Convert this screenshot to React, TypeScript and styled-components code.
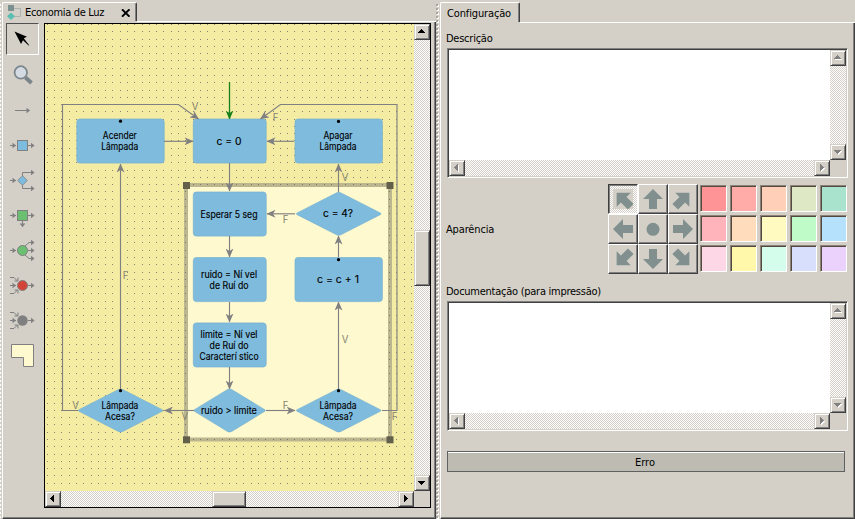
import React from "react";
import styled, { createGlobalStyle, css } from "styled-components";

const face = "#d4d0c8";
const uiFont = '"DejaVu Sans Condensed", "Noto Sans", sans-serif';

const GlobalStyle = createGlobalStyle`
  * { box-sizing: border-box; }
  body { margin: 0; background: ${face}; overflow: hidden; }
`;

const Window = styled.main`
  display: grid;
  grid-template-columns: 2px 434px 4px 415px;
  width: 855px;
  height: 519px;
  background: ${face};
  color: #000;
  font: 11px ${uiFont};
`;

const Grip = styled.div<{ $edge?: boolean }>`
  margin-top: 4px;
  background: ${(p) =>
    p.$edge
      ? "repeating-linear-gradient(#fff 0 2px, #d4d0c8 2px 4px) 0 0 / 1px 100% no-repeat"
      : `linear-gradient(#aaa69e 2px, transparent 2px) 0 0 / 2px 4px repeat-y,
         linear-gradient(transparent 1px, #fff 1px 3px, transparent 3px) 1px 0 / 2px 4px repeat-y`};
`;

const Pane = styled.section`
  display: flex;
  flex-direction: column;
  padding-top: 2px;
  min-width: 0;
`;

const Tab = styled.div<{ $width: number; $height: number }>`
  display: flex;
  align-items: center;
  flex: none;
  width: ${(p) => p.$width}px;
  height: ${(p) => p.$height}px;
  border-left: 1px solid #fff;
  border-top: 1px solid #fff;
  border-right: 1px solid #404040;
  border-radius: 2px 2px 0 0;
  box-shadow: inset -1px 0 #808080;
  white-space: nowrap;
`;

const TabTitle = styled.span<{ $left: number; $spacing: number; $width?: number }>`
  flex: none;
  width: ${(p) => (p.$width ? `${p.$width}px` : "auto")};
  margin-left: ${(p) => p.$left}px;
  padding-top: 2px;
  letter-spacing: ${(p) => p.$spacing}px;
  line-height: 14px;
`;

const TabLine = styled.div<{ $start: number }>`
  flex: none;
  height: 1px;
  background: linear-gradient(#fff, #fff) ${(p) => p.$start}px 0 no-repeat;
  border-left: 1px solid #fff;
`;

const PaneBody = styled.div`
  flex: 1;
  min-height: 0;
  border-left: 1px solid #fff;
  border-right: 1px solid #404040;
  border-bottom: 1px solid #404040;
  box-shadow: inset -1px -1px #808080;
`;

const EditorBody = styled(PaneBody)`
  display: flex;
  padding: 1px 0 0 3px;
`;

const Toolbar = styled.div`
  display: flex;
  flex-direction: column;
  gap: 3px;
  width: 38px;
`;

const ToolButton = styled.button<{ $active?: boolean }>`
  width: 33px;
  height: 32px;
  padding: 0;
  border: 1px solid transparent;
  background: transparent;
  ${(p) =>
    p.$active &&
    css`
      border-color: #505050 #fff #fff #505050;
    `}
  svg { display: block; }
`;

const checker = css`
  background: repeating-conic-gradient(#fff 0 25%, ${face} 0 50%) 0 0 / 2px 2px;
`;

const ScrollGrid = styled.div`
  display: grid;
  grid-template-columns: 1fr 16px;
  grid-template-rows: 1fr 16px;
`;

const CanvasFrame = styled(ScrollGrid)`
  width: 387px;
  height: 485px;
  border: 1px solid #000;
  svg { display: block; }
`;

const TextFrame = styled(ScrollGrid)`
  width: 401px;
  height: 130px;
  border: 1px solid;
  border-color: #808080 #fff #fff #808080;
  padding: 1px;
  box-shadow: inset 1px 1px #404040;
`;

const TextArea = styled.textarea`
  width: 100%;
  height: 100%;
  padding: 2px;
  border: 0;
  outline: 0;
  resize: none;
  background: #fff;
`;

const Track = styled.div<{ $vertical?: boolean }>`
  display: flex;
  flex-direction: ${(p) => (p.$vertical ? "column" : "row")};
  min-width: 0;
  min-height: 0;
  ${checker}
`;

const raised = css`
  background: ${face};
  border: 1px solid;
  border-color: #d4d0c8 #404040 #404040 #d4d0c8;
  box-shadow: inset 1px 1px #fff, inset -1px -1px #808080;
`;

const ArrowButton = styled.button`
  ${raised}
  flex: none;
  width: 16px;
  height: 16px;
  padding: 0;
  svg { display: block; }
`;

const Thumb = styled.div<{ $vertical?: boolean; $size: number }>`
  ${raised}
  width: ${(p) => (p.$vertical ? 16 : p.$size)}px;
  height: ${(p) => (p.$vertical ? p.$size : 16)}px;
`;

const Space = styled.div<{ $grow?: number; $size?: number }>`
  flex: ${(p) => (p.$grow ? `${p.$grow} 1 0` : `0 0 ${p.$size}px`)};
`;

const FormBody = styled(PaneBody)`
  display: flex;
  flex-direction: column;
  padding: 8px 0 0 6px;
`;

const Label = styled.label<{ $height: number; $spacing?: number }>`
  display: block;
  height: ${(p) => p.$height}px;
  line-height: 15px;
  margin-left: -1px;
  letter-spacing: ${(p) => p.$spacing ?? 0}px;
`;

const AppearanceRow = styled.div`
  display: flex;
  height: 90px;
  margin: 6px 0 10px;
`;

const AppearanceLabel = styled(Label)`
  align-self: center;
  width: 162px;
`;

const DirectionGrid = styled.div`
  display: grid;
  grid-template-columns: repeat(3, 30px);
  grid-template-rows: repeat(3, 30px);
`;

const Direction = styled.button<{ $active?: boolean }>`
  padding: 0;
  background: ${face};
  border: 1px solid;
  border-color: #fff #404040 #404040 #fff;
  box-shadow: inset -1px -1px #808080;
  ${(p) =>
    p.$active &&
    css`
      ${checker}
      border-color: #404040 #fff #fff #404040;
      box-shadow: inset 1px 1px #808080;
    `}
  svg { display: block; }
`;

const Swatches = styled.div`
  display: grid;
  grid-template-columns: repeat(5, 27px);
  grid-template-rows: repeat(3, 27px);
  gap: 3px;
  margin: 1px 0 0 2px;
`;

const Swatch = styled.button<{ $color: string }>`
  padding: 0;
  background: ${(p) => p.$color};
  border: 1px solid;
  border-color: #8b8378 #fff #fff #8b8378;
  box-shadow: inset 1px 1px #54493f;
`;

const ErrorButton = styled.button`
  width: 398px;
  height: 21px;
  margin-top: 20px;
  padding: 3px 2px 0 0;
  border: 1px solid #5f6161;
  background: #bebbb3;
  box-shadow: inset 0 1px #fff;
  font: 11px ${uiFont};
  line-height: 14px;
`;

type Dir = "up" | "down" | "left" | "right";
const arrowShape: Record<Dir, string> = {
  up: "M7 5h1v1h1v1h1v1h1v1H4V8h1V7h1V6h1z",
  down: "M4 6h7v1h-1v1H9v1H8v1H7V9H6V8H5V7H4z",
  left: "M9 4v7H8v-1H7V9H6V8H5V7h1V6h1V5h1V4z",
  right: "M6 4h1v1h1v1h1v1h1v1H9v1H8v1H7v1H6z",
};

function ScrollArrow({ dir, disabled }: { dir: Dir; disabled?: boolean }) {
  return (
    <ArrowButton aria-label={dir}>
      <svg width="14" height="14" viewBox="1 1 14 14" shapeRendering="crispEdges">
        {disabled && <path d={arrowShape[dir]} fill="#fff" transform="translate(1 1)" />}
        <path d={arrowShape[dir]} fill={disabled ? "#808080" : "#000"} />
      </svg>
    </ArrowButton>
  );
}

const range = (n: number) => Array.from({ length: n }, (_, i) => i);

const dots = range(51)
  .map((i) =>
    range(64)
      .map((j) => `M${Math.floor(47.4 + i * 7.28)} ${Math.floor(24.5 + j * 7.28)}h1v1h-1z`)
      .join(""),
  )
  .join("");

const blocks = [
  { x: 76.5, y: 118.7, w: 88, lines: ["Acender", "Lâmpada"], widths: [34, 37] },
  { x: 193, y: 118.7, w: 73.5, lines: ["c = 0"], widths: [25] },
  { x: 294.7, y: 118.7, w: 88, lines: ["Apagar", "Lâmpada"], widths: [29, 37] },
  { x: 193, y: 191.7, w: 73.5, lines: ["Esperar 5 seg"], widths: [57] },
  { x: 193, y: 257.2, w: 73.5, lines: ["ruido = Ní vel", "de Ruí do"], widths: [56, 39] },
  { x: 193, y: 322.6, w: 73.5, lines: ["limite = Ní vel", "de Ruí do", "Caracterí stico"], widths: [57, 39, 59] },
  { x: 294.7, y: 257.2, w: 88, lines: ["c = c + 1"], widths: [42] },
];

const decisions = [
  { cx: 338.7, cy: 213.8, rx: 43, lines: ["c = 4?"], widths: [30] },
  { cx: 120.6, cy: 410.5, rx: 43, lines: ["Lâmpada", "Acesa?"], widths: [37, 30] },
  { cx: 229.6, cy: 410.5, rx: 36.5, lines: ["ruido > limite"], widths: [56] },
  { cx: 338.7, cy: 410.5, rx: 43, lines: ["Lâmpada", "Acesa?"], widths: [37, 30] },
];

const edges = [
  "M164 141.3H193",
  "M294 141.3H267",
  "M229.5 163V191",
  "M229.5 236V257",
  "M229.5 302V322",
  "M229.5 367V389",
  "M338.5 192V164",
  "M295 213.8H267",
  "M338.5 257V236",
  "M338.5 389V302",
  "M194 410.5H164.5",
  "M266 410.5H295",
  "M120.5 389V164",
  "M78 410.5H62.5V104.5H178.5L198.5 119",
  "M382 410.5H397V104.5H280.5L260.5 119",
];

const marks: [string, number, number][] = [
  ["V", 195, 110], ["F", 275.5, 121], ["V", 345, 181], ["F", 285.5, 223],
  ["V", 345, 343], ["F", 125.5, 279], ["V", 75.5, 409], ["V", 184.8, 419.5],
  ["F", 285.7, 409], ["F", 394.5, 419.5],
];

const NodeText = styled.text`
  font: 9.7px Inter, sans-serif;
  text-anchor: middle;
  fill: #000;
  stroke: #000;
  stroke-width: 0.15px;
`;

const MarkText = styled.text`
  font: 9.7px Inter, sans-serif;
  text-anchor: middle;
  fill: #85836f;
`;

function Lines({ cx, cy, lines, widths }: { cx: number; cy: number; lines: string[]; widths: number[] }) {
  return (
    <>
      {lines.map((line, i) => (
        <NodeText
          key={line}
          x={cx - 0.7}
          y={cy + 3.6 + (i - (lines.length - 1) / 2) * 10.9}
          textLength={widths[i]}
          lengthAdjust="spacingAndGlyphs"
        >
          {line}
        </NodeText>
      ))}
    </>
  );
}

function Diagram() {
  return (
    <svg width="369" height="467" viewBox="45 24 369 467">
      <defs>
        <marker id="head" markerWidth="9" markerHeight="8" refX="8.5" refY="4" orient="auto" markerUnits="userSpaceOnUse">
          <path d="M0 0L9 4L0 8L2.5 4Z" fill="#808080" />
        </marker>
        <marker id="start" markerWidth="9" markerHeight="8" refX="8.5" refY="4" orient="auto" markerUnits="userSpaceOnUse">
          <path d="M0 0L9 4L0 8L2.5 4Z" fill="#17801c" />
        </marker>
      </defs>
      <rect x="45" y="24" width="369" height="467" fill="#f5eca4" />
      <path d={dots} fill="#858374" shapeRendering="crispEdges" />
      <path d="M188 187H388V437.5H188Z" fill="#fff9d0" />
      <rect x="186" y="185" width="204" height="254.5" fill="none" stroke="#5f5e6c" strokeOpacity=".38" strokeWidth="4" />
      {blocks.map((b, i) => (
        <g key={i}>
          <rect x={b.x + 0.3} y={b.y + 0.3} width={b.w - 0.6} height="44.1" rx="3" fill="#7fbbdd" stroke="#75b1d0" strokeWidth=".7" />
          <Lines cx={b.x + b.w / 2} cy={b.y + 22.6} lines={b.lines} widths={b.widths} />
        </g>
      ))}
      {decisions.map((d, i) => (
        <g key={i}>
          <path
            d={`M${d.cx - d.rx + 1} ${d.cy - 0.6}L${d.cx - 2} ${d.cy - 21}Q${d.cx} ${d.cy - 22} ${d.cx + 2} ${d.cy - 21}L${d.cx + d.rx - 1} ${d.cy - 0.6}V${d.cy + 0.6}L${d.cx + 2} ${d.cy + 21}Q${d.cx} ${d.cy + 22} ${d.cx - 2} ${d.cy + 21}L${d.cx - d.rx + 1} ${d.cy + 0.6}Z`}
            fill="#7fbbdd"
            stroke="#75b1d0"
            strokeWidth=".7"
          />
          <Lines cx={d.cx} cy={d.cy} lines={d.lines} widths={d.widths} />
        </g>
      ))}
      {edges.map((d) => (
        <path key={d} d={d} fill="none" stroke="#808080" strokeWidth="1.15" markerEnd="url(#head)" />
      ))}
      <path d="M229.5 82V119" stroke="#17801c" strokeWidth="1.3" markerEnd="url(#start)" />
      {marks.map(([t, x, y]) => (
        <MarkText key={`${x}-${y}`} x={x} y={y}>{t}</MarkText>
      ))}
      {[[120.5, 121.2], [338.5, 121.4], [338.5, 259.7], [120.5, 390.7], [338.5, 390.7]].map(([x, y]) => (
        <circle key={`${x}-${y}`} cx={x} cy={y} r="1.6" fill="#000" />
      ))}
      {[[183, 182], [386.5, 182], [183, 436.3], [386.5, 436.3]].map(([x, y]) => (
        <rect key={`${x}-${y}`} x={x} y={y} width="7" height="7" fill="#625f4b" />
      ))}
    </svg>
  );
}

const right = (x: number, y: number) => `M${x - 3} ${y - 2.8}L${x + 0.6} ${y}L${x - 3} ${y + 2.8}Z`;
const stroke = { stroke: "#808080", strokeWidth: 1, fill: "none" };

const InArrow = () => (
  <>
    <path d="M4 17.5H10" {...stroke} />
    <path d={right(9.5, 17.5)} fill="#808080" />
  </>
);
const OutArrow = () => (
  <>
    <path d="M22 17.5H28" {...stroke} />
    <path d={right(28, 17.5)} fill="#808080" />
  </>
);
const MergeArrows = () => (
  <path d="M4 9.5H8L11.5 13M8.5 13H12V9.5M4 25.5H8L11.5 22M8.5 22H12V25.5" {...stroke} />
);

const icons = [
  <path d="M8.5 8.5L21 13.8L17.8 15.2L23.2 22.2L22.6 22.6L17 17.3L15 21Z" fill="#000" />,
  <>
    <path d="M19.5 19.5L25.5 25" stroke="#7a8589" strokeWidth="4" />
    <circle cx="14.8" cy="14.4" r="6.2" fill="#d5dbe2" stroke="#7b888d" strokeWidth="1.8" />
  </>,
  <>
    <path d="M9 17.5H23" {...stroke} />
    <path d={right(23.5, 17.5)} fill="#808080" />
  </>,
  <>
    <InArrow /><OutArrow />
    <rect x="11.5" y="12.5" width="10" height="10" fill="#7cbcdf" stroke="#808080" />
  </>,
  <>
    <InArrow />
    <path d="M16.5 13V9.5H28M16.5 22V25.5H28" {...stroke} />
    <path d={right(28, 9.5) + right(28, 25.5)} fill="#808080" />
    <path d="M16.5 12.7L21.3 17.5L16.5 22.3L11.7 17.5Z" fill="#7cbcdf" stroke="#808080" strokeWidth=".8" />
  </>,
  <>
    <InArrow /><OutArrow />
    <path d="M16.5 23V28" {...stroke} />
    <path d="M13.7 25.5L16.5 29.2L19.3 25.5Z" fill="#808080" />
    <rect x="11.5" y="12.5" width="10" height="10" fill="#6abf71" stroke="#808080" />
  </>,
  <>
    <InArrow /><OutArrow />
    <path d="M19 13L23 9.5H27M19 22L23 25.5H27" {...stroke} />
    <path d={right(28, 9.5) + right(28, 25.5)} fill="#808080" />
    <circle cx="16.5" cy="17.5" r="5" fill="#6abf71" stroke="#808080" />
  </>,
  <>
    <InArrow /><OutArrow /><MergeArrows />
    <circle cx="16.5" cy="17.5" r="5" fill="#d34438" stroke="#808080" />
  </>,
  <>
    <InArrow /><OutArrow /><MergeArrows />
    <circle cx="16.5" cy="17.5" r="5.2" fill="#808080" />
  </>,
  <path d="M5.5 6.5H27.5V28.5H17.5V19.5H5.5Z" fill="#fff9d0" stroke="#808080" />,
];

const toolNames = ["Selecionar", "Zoom", "Seta", "Ação", "Decisão", "Subfluxo", "Divisão", "Fim", "Junção", "Nota"];

const directions: (number | null)[] = [-45, 0, 45, -90, null, 90, -135, 180, 135];

const colors = [
  "#ff9497", "#ffaca8", "#ffd0b7", "#dfe8c4", "#a9e3cd",
  "#ffb3ba", "#ffdcbc", "#fffac0", "#bffac9", "#b5e1fc",
  "#fed7e6", "#fff8aa", "#d4fdeb", "#d8dffc", "#ead2fc",
];

function TextBox({ id }: { id: string }) {
  return (
    <TextFrame>
      <TextArea id={id} />
      <Track $vertical>
        <ScrollArrow dir="up" disabled /><Space $grow={1} /><ScrollArrow dir="down" disabled />
      </Track>
      <Track>
        <ScrollArrow dir="left" disabled /><Space $grow={1} /><ScrollArrow dir="right" disabled />
      </Track>
    </TextFrame>
  );
}

const TabIcon = styled.svg`
  margin-left: 4px;
  flex: none;
`;
const CloseIcon = styled.svg`
  margin: 2px 0 0 16px;
  flex: none;
`;

export default function App() {
  return (
    <>
      <GlobalStyle />
      <Window>
        <Grip $edge />
        <Pane>
          <Tab $width={135} $height={19}>
            <TabIcon width="15" height="16" viewBox="0 0 15 16">
              <path d="M7 4.5H13.5V12.5H4" fill="none" stroke="#aab3af" />
              <rect x="1" y="1" width="6" height="6" fill="#7b918f" />
              <path d="M4 8.5L8 12.2L4 16L0 12.2Z" fill="#5abfb2" />
            </TabIcon>
            <TabTitle $left={3} $spacing={-0.33} $width={80}>Economia de Luz</TabTitle>
            <CloseIcon width="10" height="8" viewBox="0 0 10 8">
              <path d="M1 .3L8.5 7.7M8.5 .3L1 7.7" stroke="#000" strokeWidth="1.9" />
            </CloseIcon>
          </Tab>
          <TabLine $start={134} />
          <EditorBody>
            <Toolbar>
              {icons.map((icon, i) => (
                <ToolButton key={i} $active={i === 0} aria-label={toolNames[i]}>
                  <svg width="31" height="30" viewBox="1 1 31 30">{icon}</svg>
                </ToolButton>
              ))}
            </Toolbar>
            <CanvasFrame>
              <Diagram />
              <Track $vertical>
                <ScrollArrow dir="up" />
                <Space $size={190} />
                <Thumb $vertical $size={56} />
                <Space $grow={1} />
                <ScrollArrow dir="down" />
              </Track>
              <Track>
                <ScrollArrow dir="left" />
                <Space $size={151} />
                <Thumb $size={34} />
                <Space $grow={1} />
                <ScrollArrow dir="right" />
              </Track>
            </CanvasFrame>
          </EditorBody>
        </Pane>
        <Grip />
        <Pane>
          <Tab $width={80} $height={20}>
            <TabTitle $left={6} $spacing={-0.14}>Configuração</TabTitle>
          </Tab>
          <TabLine $start={79} />
          <FormBody>
            <Label htmlFor="description" $height={17} $spacing={-0.25}>Descrição</Label>
            <TextBox id="description" />
            <AppearanceRow>
              <AppearanceLabel as="span" $height={15} $spacing={-0.15}>Aparência</AppearanceLabel>
              <DirectionGrid>
                {directions.map((angle, i) => (
                  <Direction key={i} $active={i === 0} aria-label={`Direção ${i + 1}`}>
                    <svg width="28" height="28" viewBox="1 1 28 28">
                      {i === 0 && <rect x="5" y="5" width="20" height="20" fill={face} />}
                      {angle === null ? (
                        <circle cx="15" cy="15.3" r="6.5" fill="#81908e" />
                      ) : (
                        <path
                          d="M15 5L25 15H19V25H11V15H5Z"
                          fill="#81908e"
                          transform={`rotate(${angle} 15 15)${angle % 90 ? " translate(0 1)" : ""}`}
                        />
                      )}
                    </svg>
                  </Direction>
                ))}
              </DirectionGrid>
              <Swatches>
                {colors.map((c) => <Swatch key={c} $color={c} aria-label={c} />)}
              </Swatches>
            </AppearanceRow>
            <Label htmlFor="documentation" $height={17} $spacing={-0.26}>Documentação (para impressão)</Label>
            <TextBox id="documentation" />
            <ErrorButton>Erro</ErrorButton>
          </FormBody>
        </Pane>
      </Window>
    </>
  );
}
